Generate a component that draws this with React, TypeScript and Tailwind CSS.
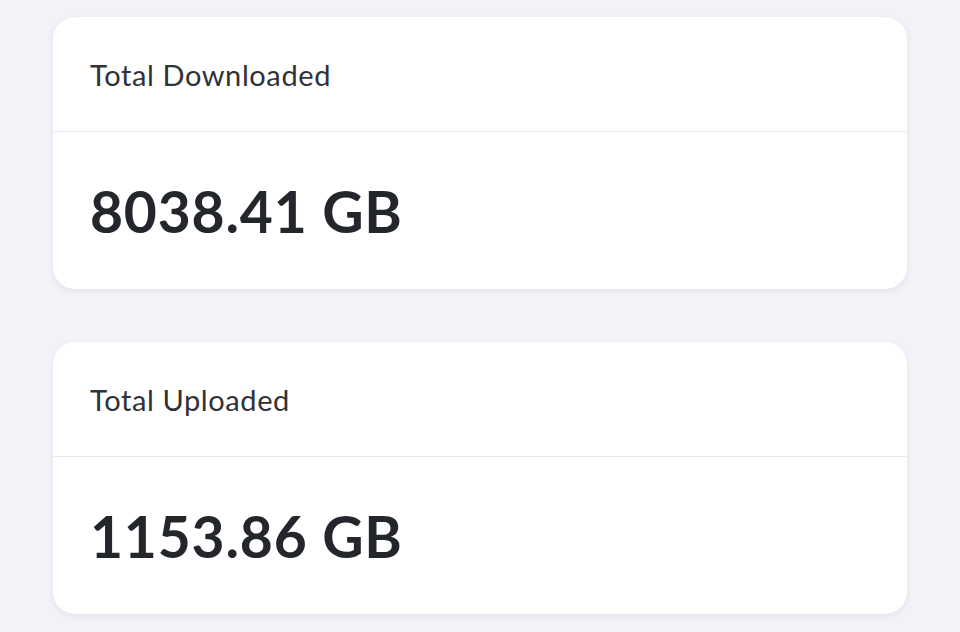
const stats = [
  { label: "Total Downloaded", value: "8038.41 GB" },
  { label: "Total Uploaded", value: "1153.86 GB" },
];

const StatCard = ({ label, value }: { label: string; value: string }) => {
  return (
    <div className="bg-white rounded-[22px] shadow-[0_2px_6px_rgba(40,40,80,0.08)] overflow-hidden">
      <div className="h-[115px] flex items-center px-[37px] border-b border-[#e8e8ee]">
        <h3 className="text-[29px] text-[#2f3236] tracking-[0.6px] pt-[2px]">{label}</h3>
      </div>
      <div className="h-[157px] flex items-center px-[37px]">
        <span className="text-[57px] font-bold text-[#23262b] leading-none tracking-[0.8px] pt-[2px]">{value}</span>
      </div>
    </div>
  );
};

export default function App() {
  return (
    <div
      className="min-h-screen w-full bg-[#f2f2f8] px-[53px] pt-[17px] flex flex-col gap-[53px]"
      style={{ fontFamily: "Lato, 'Noto Sans', sans-serif" }}
    >
      {stats.map((s) => (
        <StatCard key={s.label} label={s.label} value={s.value} />
      ))}
    </div>
  );
}
